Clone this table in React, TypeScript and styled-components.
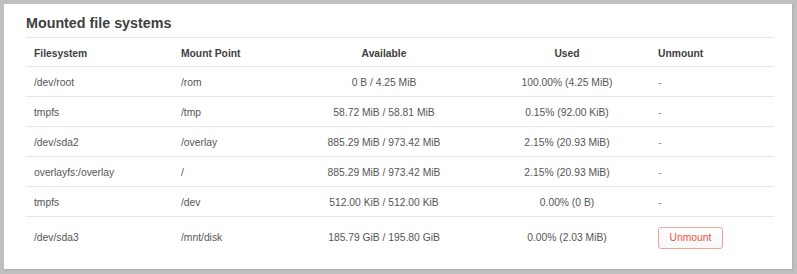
import React from "react";
import styled, { createGlobalStyle } from "styled-components";

const Global = createGlobalStyle`
  html, body { margin: 0; padding: 0; background: #bfbfbf; }
  body { font-family: "Liberation Sans", Arial, sans-serif; }
`;

const Page = styled.div`
  padding: 4px 5px 5px 4px;
  width: 797px;
  height: 274px;
  box-sizing: border-box;
`;

const Panel = styled.section`
  background: #fff;
  width: 788px;
  height: 265px;
  box-sizing: border-box;
  padding: 9px 18px 0 22px;
  box-shadow: 1px 1px 1px rgba(0, 0, 0, 0.08);
`;

const Title = styled.h2`
  margin: 0;
  font-size: 14.3px;
  line-height: 20px;
  font-weight: 700;
  color: #404040;
  padding: 0 0 4px 0;
  border-bottom: 1px solid #e6e6e6;
`;

const Table = styled.div`
  display: flex;
  flex-direction: column;
  width: 748px;
`;

const Row = styled.div<{ $h: number; $shift: number; $last?: boolean }>`
  display: grid;
  grid-template-columns: 147px 111px 200px 166px 124px;
  height: ${(p) => p.$h}px;
  padding-top: ${(p) => p.$shift}px;
  box-sizing: border-box;
  border-bottom: ${(p) => (p.$last ? "none" : "1px solid #e6e6e6")};
  align-items: center;
`;

const Cell = styled.div<{ $center?: boolean; $head?: boolean; $muted?: boolean }>`
  padding: 0 8px;
  font-size: 10.3px;
  line-height: 14px;
  text-align: ${(p) => (p.$center ? "center" : "left")};
  font-weight: ${(p) => (p.$head ? 700 : 400)};
  color: ${(p) => (p.$head ? "#404040" : p.$muted ? "#888" : "#555")};
  white-space: nowrap;
`;

const UnmountButton = styled.button`
  width: 65px;
  height: 22px;
  box-sizing: border-box;
  border: 1px solid #f3a29b;
  border-radius: 3px;
  background: linear-gradient(#ffffff, #f7f7f7);
  color: #f0524a;
  font-family: "Liberation Sans", Arial, sans-serif;
  font-size: 10.3px;
  padding: 0;
  cursor: pointer;
  display: block;
`;

type Mount = {
  fs: string;
  mp: string;
  avail: string;
  used: string;
  unmount: boolean;
};

const mounts: Mount[] = [
  { fs: "/dev/root", mp: "/rom", avail: "0 B / 4.25 MiB", used: "100.00% (4.25 MiB)", unmount: false },
  { fs: "tmpfs", mp: "/tmp", avail: "58.72 MiB / 58.81 MiB", used: "0.15% (92.00 KiB)", unmount: false },
  { fs: "/dev/sda2", mp: "/overlay", avail: "885.29 MiB / 973.42 MiB", used: "2.15% (20.93 MiB)", unmount: false },
  { fs: "overlayfs:/overlay", mp: "/", avail: "885.29 MiB / 973.42 MiB", used: "2.15% (20.93 MiB)", unmount: false },
  { fs: "tmpfs", mp: "/dev", avail: "512.00 KiB / 512.00 KiB", used: "0.00% (0 B)", unmount: false },
  { fs: "/dev/sda3", mp: "/mnt/disk", avail: "185.79 GiB / 195.80 GiB", used: "0.00% (2.03 MiB)", unmount: true },
];

export default function App() {
  return (
    <Page>
      <Global />
      <Panel>
        <Title>Mounted file systems</Title>
        <Table>
          <Row $h={29} $shift={3}>
            <Cell $head>Filesystem</Cell>
            <Cell $head>Mount Point</Cell>
            <Cell $head $center>Available</Cell>
            <Cell $head $center>Used</Cell>
            <Cell $head>Unmount</Cell>
          </Row>
          {mounts.map((m, i) => {
            const last = i === mounts.length - 1;
            return (
              <Row key={i} $h={last ? 40 : 30} $shift={last ? 1 : 2} $last={last}>
                <Cell>{m.fs}</Cell>
                <Cell>{m.mp}</Cell>
                <Cell $center>{m.avail}</Cell>
                <Cell $center>{m.used}</Cell>
                <Cell $muted={!m.unmount}>
                  {m.unmount ? <UnmountButton>Unmount</UnmountButton> : "-"}
                </Cell>
              </Row>
            );
          })}
        </Table>
      </Panel>
    </Page>
  );
}
